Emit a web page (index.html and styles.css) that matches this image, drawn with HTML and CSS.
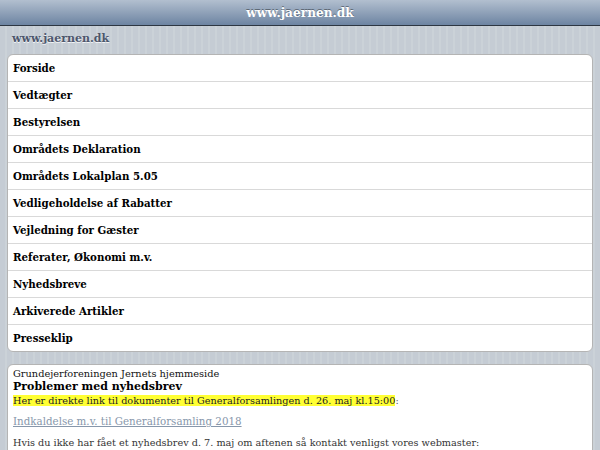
FILE: index.html
```html
<!DOCTYPE html>
<html lang="da">
<head>
<meta charset="utf-8">
<title>www.jaernen.dk</title>
<link rel="stylesheet" href="styles.css">
</head>
<body>
<div class="toolbar"><h1 class="title">www.jaernen.dk</h1></div>
<h2 class="group">www.jaernen.dk</h2>
<ul class="menu">
<li>Forside</li>
<li>Vedtægter</li>
<li>Bestyrelsen</li>
<li>Områdets Deklaration</li>
<li>Områdets Lokalplan 5.05</li>
<li>Vedligeholdelse af Rabatter</li>
<li>Vejledning for Gæster</li>
<li>Referater, Økonomi m.v.</li>
<li>Nyhedsbreve</li>
<li>Arkiverede Artikler</li>
<li>Presseklip</li>
</ul>
<div class="panel">
<div class="site">Grundejerforeningen Jernets hjemmeside</div>
<h3 class="headline">Problemer med nyhedsbrev</h3>
<p class="para"><span class="mark">Her er direkte link til dokumenter til Generalforsamlingen d. 26. maj kl.15:00</span><span class="colon">:</span></p>
<p class="para"><a class="link" href="#">Indkaldelse m.v. til Generalforsamling 2018</a></p>
<p class="para">Hvis du ikke har fået et nyhedsbrev d. 7. maj om aftenen så kontakt venligst vores webmaster:</p>
</div>
</body>
</html>
```
FILE: styles.css
```css
html, body {
  margin: 0;
  padding: 0;
}
body {
  font-family: "DejaVu Serif", serif;
  background: repeating-linear-gradient(90deg, #c5ccd4 0, #c5ccd4 5px, #cbd2d8 5px, #cbd2d8 7px);
  overflow: hidden;
  height: 450px;
}
.toolbar {
  height: 25px;
  border-bottom: 1px solid #2d3642;
  background: linear-gradient(#b2bfcf, #6d84a2);
  display: flex;
  align-items: center;
  justify-content: center;
}
.title {
  margin: 0;
  font-size: 12.2px;
  font-weight: bold;
  color: #fff;
  text-shadow: 0 -1px 0 rgba(0,0,0,0.4);
}
.group {
  margin: 0;
  padding: 6px 12px 0;
  height: 23px;
  font-size: 11px;
  font-weight: bold;
  color: #4c566c;
  text-shadow: 0 1px 0 rgba(255,255,255,0.8);
  box-sizing: border-box;
}
.menu {
  list-style: none;
  margin: 5px 7px 0;
  padding: 0;
  background: #fff;
  border: 1px solid #b4b4b4;
  border-radius: 6px;
}
.menu li {
  height: 26px;
  border-top: 1px solid #d9d9d9;
  display: flex;
  align-items: center;
  padding-left: 5px;
  font-size: 10.25px;
  font-weight: bold;
  color: #000;
}
.menu li:first-child {
  border-top: none;
}
.panel {
  margin: 12px 7px 0;
  background: #fff;
  border: 1px solid #b4b4b4;
  border-radius: 6px;
  padding: 3px 5px 10px;
  color: #333;
}
.site {
  font-size: 9.8px;
  color: #111;
  line-height: 12px;
}
.headline {
  margin: 0;
  font-size: 11px;
  font-weight: bold;
  color: #000;
  line-height: 14px;
}
.para {
  margin: 0 0 8px;
  font-size: 9.7px;
  line-height: 13px;
}
.mark {
  background: #ffff33;
  color: #222;
}
.colon {
  color: #555;
}
.link {
  color: #8797ab;
  text-decoration: underline;
  font-size: 10.3px;
}
```
